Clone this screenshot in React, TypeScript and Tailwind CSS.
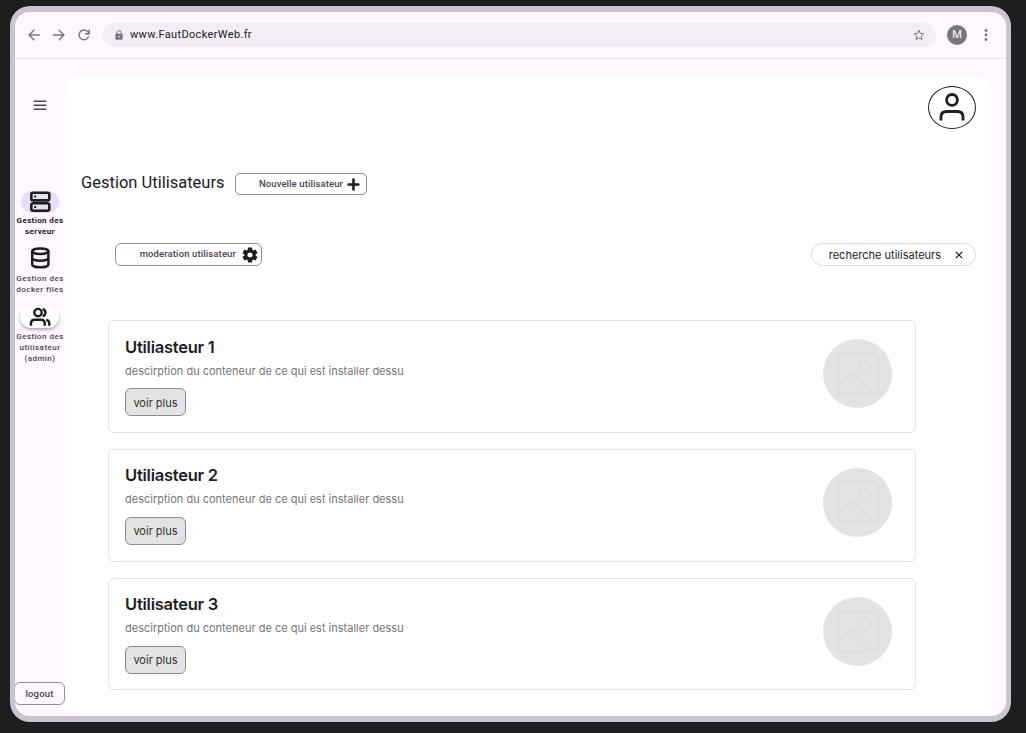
import React from "react";

const users = ["Utiliasteur 1", "Utiliasteur 2", "Utilisateur 3"];

function BrowserBar() {
  return (
    <header className="flex h-[47px] shrink-0 items-center border-b border-[#e7e0ec] pl-[11px]">
      <svg className="size-4 text-[#79747e]" viewBox="0 0 16 16" fill="none" stroke="currentColor" strokeWidth="1.4">
        <path d="M14 8H3.500M8.300 2.800 3.100 8l5.200 5.200" />
      </svg>
      <svg className="ml-[9px] size-4 text-[#79747e]" viewBox="0 0 16 16" fill="none" stroke="currentColor" strokeWidth="1.4">
        <path d="M2 8h10.500M7.700 2.800 12.900 8l-5.200 5.200" />
      </svg>
      <svg className="ml-[9px] size-4 text-[#79747e]" viewBox="0 0 16 16" fill="none" stroke="currentColor" strokeWidth="1.4">
        <path d="M12.600 9.500A4.900 4.900 0 1 1 11.600 4.600L13 6M13.200 2.500v4.200H8.900" />
      </svg>
      <div className="ml-[11px] flex h-6 w-[833px] items-center rounded-full bg-[#f3edf7] pl-[11px] pr-[11px]">
        <svg className="size-[10px] text-[#79747e]" viewBox="0 0 10 10">
          <path d="M3 4V2.700a2 2 0 0 1 4 0V4" fill="none" stroke="currentColor" />
          <rect x="1.300" y="3.700" width="7.400" height="6" rx=".8" fill="currentColor" />
          <circle cx="5" cy="6.700" r=".8" fill="#f3edf7" />
        </svg>
        <span className="ml-[6px] text-[11px] leading-4 tracking-[0.35px] text-[#1d1b20]">www.FautDockerWeb.fr</span>
        <svg className="ml-auto size-3 text-[#79747e]" viewBox="0 0 12 12" fill="none" stroke="currentColor" strokeWidth="1">
          <path d="m6 1.200 1.350 3.300 3.500.3-2.650 2.300.8 3.500L6 8.750 3 10.600l.8-3.500L1.150 4.800l3.500-.3Z" />
        </svg>
      </div>
      <div className="ml-[11px] flex size-5 items-center justify-center rounded-full bg-[#79747e] text-[11px] text-white">M</div>
      <svg className="ml-[11px] size-4 text-[#79747e]" viewBox="0 0 16 16" fill="currentColor">
        <circle cx="8" cy="3.500" r="1.450" />
        <circle cx="8" cy="8" r="1.450" />
        <circle cx="8" cy="12.500" r="1.450" />
      </svg>
    </header>
  );
}

function Sidebar() {
  return (
    <nav className="flex w-[50px] shrink-0 flex-col items-center text-center text-[8px] font-medium leading-[11px] tracking-[0.46px] text-[#49454f]">
      <svg className="mt-[38px] size-4" viewBox="0 0 16 16" fill="none" stroke="#49454f" strokeWidth="1.400">
        <path d="M1.700 4.200h12.600M1.700 8.200h12.600M1.700 12.200h12.600" />
      </svg>
      <div className="mt-[78px] flex h-[22px] w-[38px] items-center justify-center rounded-full bg-[#e8def8]">
        <svg className="size-[22px]" viewBox="0 0 22 22" fill="none" stroke="#1e1e1e" strokeWidth="2.600">
          <rect x="2.300" y="1.800" width="18" height="7.600" rx="2" />
          <rect x="2.300" y="12.200" width="18" height="7.600" rx="2" />
          <path d="M5.200 5.600h2M5.200 16h2" strokeWidth="2" />
        </svg>
      </div>
      <div className="mt-[2px] whitespace-nowrap font-bold tracking-[0.38px] text-[#1d1b20]">
        Gestion des
        <br />
        serveur
      </div>
      <svg className="mt-[10px] size-[22px]" viewBox="0 0 22 22" fill="none" stroke="#1e1e1e" strokeWidth="2.500">
        <ellipse cx="11.300" cy="4.200" rx="8.100" ry="2.800" />
        <path d="M3.200 4.200v13.200c0 1.600 3.600 2.900 8.100 2.900s8.100-1.300 8.100-2.900V4.200M3.200 10.800c0 1.600 3.600 2.900 8.100 2.900s8.100-1.300 8.100-2.900" />
      </svg>
      <div className="mt-[4px] whitespace-nowrap">
        Gestion des
        <br />
        docker files
      </div>
      <div className="-ml-px mt-[11px] flex h-[22px] w-[39px] items-center justify-center rounded-full bg-white shadow-[0_2px_3px_#0000004d]">
        <svg className="size-[22px]" viewBox="0 0 22 22" fill="none" stroke="#1e1e1e" strokeWidth="2.400">
          <circle cx="9" cy="6.600" r="3.700" />
          <path d="M2 19.800v-2.500c0-2.100 1.400-3.500 3.500-3.500h6.700c2.100 0 3.500 1.400 3.500 3.500v2.500M13.600 3a3.700 3.700 0 0 1 0 7.200M17.200 13.900c1.900.4 3.100 1.700 3.100 3.500v2.400" />
        </svg>
      </div>
      <div className="mt-[3px] whitespace-nowrap">
        Gestion des
        <br />
        utilisateur
        <br />
        (admin)
      </div>
      <button className="-ml-px mb-[11px] mt-auto h-[23px] w-[51px] rounded-[6px] border border-[#938f96] text-[9.500px] font-medium tracking-[0.2px]">
        logout
      </button>
    </nav>
  );
}

function UserCard({ name }: { name: string }) {
  return (
    <article className="flex h-[112.600px] items-start justify-between rounded-[6px] border border-[#e3e3e3] bg-white pl-4 pr-[23px]">
      <div className="flex flex-col items-start font-['Inter',sans-serif]">
        <h2 className="mt-[15.500px] text-[16.500px] font-semibold leading-5 tracking-[-0.24px] text-[#1e1e1e]">{name}</h2>
        <p className="mt-[6px] text-[11px] leading-4 text-[#757575]">
          descirption du conteneur de ce qui est installer dessu
        </p>
        <button className="mt-[9.500px] h-7 w-[61px] rounded-[6px] border border-[#8c8c8c] bg-[#e3e3e3] pt-px text-[11px] text-[#303030]">
          voir plus
        </button>
      </div>
      <div className="mt-[18px] flex size-[69px] items-center justify-center rounded-full bg-[#e3e3e3]">
        <svg className="size-[46px]" viewBox="0 0 46 46" fill="none" stroke="#dedede" strokeWidth="3">
          <rect x="3" y="3" width="40" height="40" rx="4" />
          <circle cx="29.500" cy="16" r="5.500" />
          <path d="m3 33 13-12 21 22" />
        </svg>
      </div>
    </article>
  );
}

export default function App() {
  return (
    <div className="h-[733px] w-[1026px] overflow-hidden bg-[#1e1e1e] pl-[10px] pt-[6px] font-['Roboto',sans-serif]">
      <div className="flex h-[716px] w-[1001px] flex-col overflow-hidden rounded-[20px] border-x-[5px] border-y-[6px] border-[#cac4d0] bg-[#fef7ff]">
        <BrowserBar />
        <div className="flex min-h-0 flex-1">
          <Sidebar />
          <main className="mr-[14px] mt-4 flex min-w-0 flex-1 flex-col rounded-t-[20px] bg-white">
            <div className="flex justify-end pr-4 pt-[11px]">
              <div className="flex h-[43px] w-12 items-center justify-center rounded-[50%] border border-[#1e1e1e]">
                <svg className="size-[30px]" viewBox="0 0 30 30" fill="none" stroke="#1e1e1e" strokeWidth="2.800">
                  <circle cx="15" cy="6.900" r="5.400" />
                  <path d="M4 27.500V24c0-3.500 2.100-5.500 5.600-5.500h10.800c3.500 0 5.600 2 5.600 5.500v3.500" />
                </svg>
              </div>
            </div>
            <div className="mt-[43px] flex pl-4">
              <h1 className="w-[154px] whitespace-nowrap text-[16.500px] leading-[22px] text-[#1d1b20]">Gestion Utilisateurs</h1>
              <button className="mt-px flex h-[22px] w-[132px] items-center justify-end rounded-[5px] border border-[#938f96] pr-[6px] text-[9.500px] font-medium tracking-[0.1px] text-[#49454f]">
                <span className="whitespace-nowrap pt-px">Nouvelle utilisateur</span>
                <svg className="ml-[4px] size-[13px]" viewBox="0 0 13 13" stroke="#1e1e1e" strokeWidth="2.600" strokeLinecap="round">
                  <path d="M6.500 1.600v9.800M1.600 6.500h9.800" />
                </svg>
              </button>
            </div>
            <div className="mt-[48px] flex items-start justify-between pl-[50px] pr-4">
              <button className="flex h-[23px] w-[147px] items-center justify-end rounded-[6px] border border-[#938f96] pr-[3px] text-[9.500px] font-medium tracking-[0.12px] text-[#49454f]">
                <span className="whitespace-nowrap">moderation utilisateur</span>
                <svg className="ml-[6px] size-4" viewBox="1.300 1.300 21.400 21.400" fill="#1d1b20">
                  <path d="m9.250 22-.4-3.200q-.325-.125-.612-.3-.288-.175-.563-.375L4.700 19.375l-2.750-4.750 2.575-1.950q-.025-.175-.025-.338v-.675q0-.162.025-.337L1.950 9.375l2.750-4.750 2.975 1.250q.275-.2.575-.375.300-.175.600-.3l.4-3.200h5.500l.4 3.200q.325.125.613.300.287.175.562.375l2.975-1.250 2.750 4.750-2.575 1.950q.025.175.025.337v.675q0 .163-.05.338l2.575 1.950-2.750 4.750-2.950-1.250q-.275.200-.575.375-.3.175-.6.300l-.4 3.200Zm2.800-6.500q1.450 0 2.475-1.025T15.550 12t-1.025-2.475T12.050 8.500q-1.475 0-2.488 1.025T8.550 12t1.012 2.475T12.050 15.500" />
                </svg>
              </button>
              <div className="flex h-[23px] w-[165px] items-center justify-end rounded-full border border-[#d9d9d9] pr-3 font-['Inter',sans-serif] text-[11px] text-[#1e1e1e]">
                <span className="whitespace-nowrap pt-[2px]">recherche utilisateurs</span>
                <svg className="ml-[14px] size-2" viewBox="0 0 8 8" fill="none" stroke="#1e1e1e" strokeWidth="1.200">
                  <path d="m.8.8 6.400 6.400M7.200.8.8 7.200" />
                </svg>
              </div>
            </div>
            <section className="ml-[43px] mt-[54.400px] flex w-[808px] flex-col gap-4">
              {users.map((name) => (
                <UserCard key={name} name={name} />
              ))}
            </section>
          </main>
        </div>
      </div>
    </div>
  );
}
